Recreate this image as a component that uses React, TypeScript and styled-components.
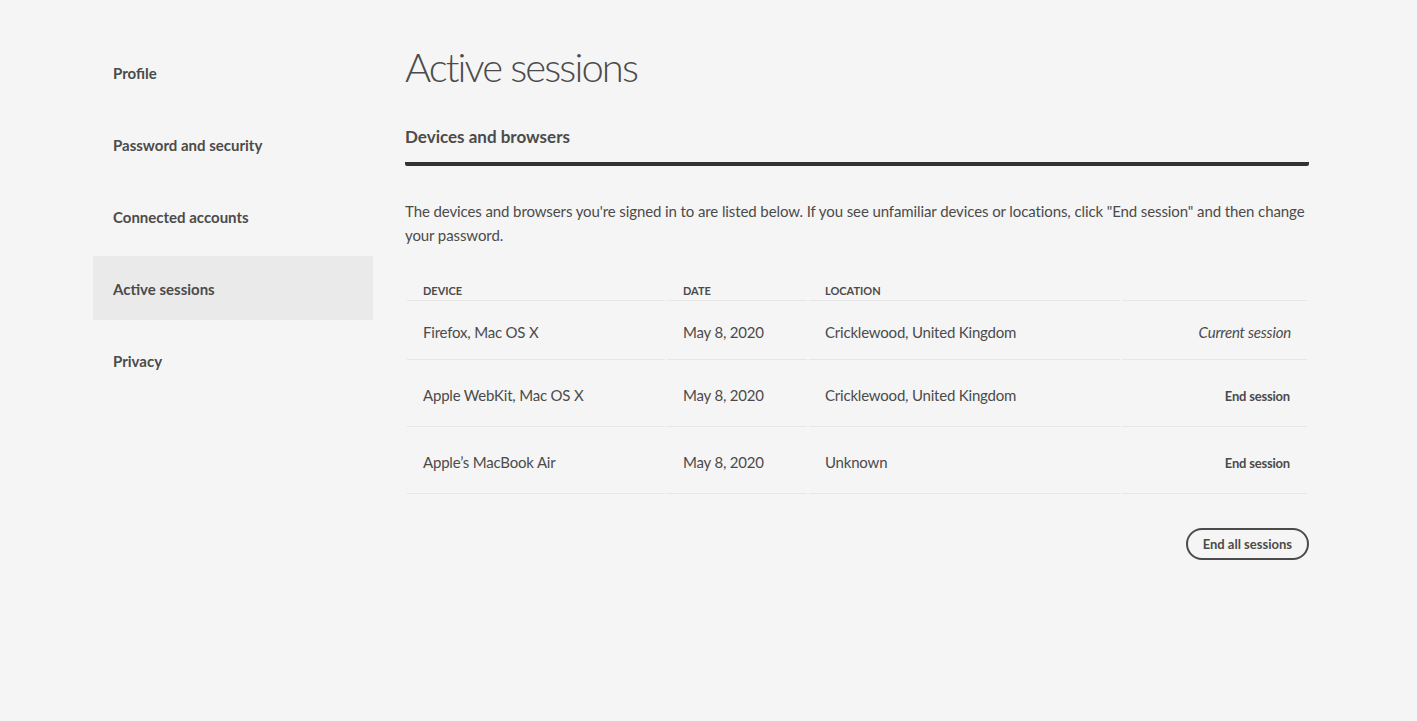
import React from 'react';
import styled, { createGlobalStyle } from 'styled-components';

interface Session {
  device: string;
  date: string;
  location: string;
  current?: boolean;
}

const navItems = ['Profile', 'Password and security', 'Connected accounts', 'Active sessions', 'Privacy'];

const sessions: Session[] = [
  { device: 'Firefox, Mac OS X', date: 'May 8, 2020', location: 'Cricklewood, United Kingdom', current: true },
  { device: 'Apple WebKit, Mac OS X', date: 'May 8, 2020', location: 'Cricklewood, United Kingdom' },
  { device: 'Apple’s MacBook Air', date: 'May 8, 2020', location: 'Unknown' },
];

function App(): JSX.Element {
  return (
    <>
      <GlobalStyle />
      <Page>
        <Sidebar>
          {navItems.map((item) => (
            <NavItem key={item} active={item === 'Active sessions'}>
              {item}
            </NavItem>
          ))}
        </Sidebar>
        <Main>
          <Title>Active sessions</Title>
          <SectionTitle>Devices and browsers</SectionTitle>
          <Intro>
            The devices and browsers you're signed in to are listed below. If you see unfamiliar devices or
            locations, click "End session" and then change your password.
          </Intro>
          <Table>
            <thead>
              <tr>
                <HeadCell width={226}>Device</HeadCell>
                <HeadCell width={108}>Date</HeadCell>
                <HeadCell width={279}>Location</HeadCell>
                <HeadCell />
              </tr>
            </thead>
            <tbody>
              {sessions.map((s, i) => (
                <Row key={s.device} first={i === 0}>
                  <Cell>{s.device}</Cell>
                  <Cell>{s.date}</Cell>
                  <Cell>{s.location}</Cell>
                  <ActionCell>
                    {s.current ? <Current>Current session</Current> : <EndLink>End session</EndLink>}
                  </ActionCell>
                </Row>
              ))}
            </tbody>
          </Table>
          <Footer>
            <EndAllButton type="button">End all sessions</EndAllButton>
          </Footer>
        </Main>
      </Page>
    </>
  );
}

const GlobalStyle = createGlobalStyle`
  html, body {
    margin: 0;
    padding: 0;
    background: #f5f5f5;
  }
  body {
    font-family: Lato, "Noto Sans", "Liberation Sans", sans-serif;
    color: #4b4b4b;
  }
`;

const Page = styled.div`
  display: flex;
  min-height: 721px;
  padding-left: 93px;
  box-sizing: border-box;
`;

const Sidebar = styled.nav`
  width: 280px;
  padding-top: 40px;
  display: flex;
  flex-direction: column;
  gap: 8px;
`;

const NavItem = styled.a<{ active?: boolean }>`
  display: flex;
  align-items: center;
  box-sizing: border-box;
  height: 64px;
  padding: 2px 0 0 20px;
  font-size: 15px;
  font-weight: 700;
  color: #4b4b4b;
  background: ${({ active }) => (active ? '#eaeaea' : 'transparent')};
  cursor: pointer;
`;

const Main = styled.main`
  width: 904px;
  margin-left: 32px;
  padding-top: 43px;
`;

const Title = styled.h1`
  margin: 0;
  font-size: 40px;
  line-height: 48px;
  font-weight: 300;
  color: #4b4b4b;
  letter-spacing: -1.9px;
`;

const SectionTitle = styled.h2`
  margin: 34px 0 0;
  font-size: 17px;
  line-height: 24px;
  font-weight: 700;
  color: #4b4b4b;
  padding-bottom: 13px;
  border-bottom: 4px solid #323232;
  border-radius: 0 0 2px 2px;
`;

const Intro = styled.p`
  margin: 33px 0 0;
  font-size: 15px;
  line-height: 24px;
  letter-spacing: -0.1px;
  color: #4b4b4b;
`;

const Table = styled.table`
  width: 100%;
  margin-top: 30px;
  border-collapse: separate;
  border-spacing: 2px 0;
  table-layout: fixed;
`;

const HeadCell = styled.th<{ width?: number }>`
  width: ${({ width }) => (width ? `${width}px` : 'auto')};
  text-align: left;
  vertical-align: bottom;
  padding: 0 16px 2px;
  height: 21px;
  line-height: 14px;
  font-size: 11px;
  font-weight: 700;
  text-transform: uppercase;
  color: #4b4b4b;
  border-bottom: 1px solid #e6e6e6;
`;

const Row = styled.tr<{ first?: boolean }>`
  height: ${({ first }) => (first ? '59px' : '67px')};
`;

const Cell = styled.td`
  padding: 4px 16px 0;
  font-size: 15px;
  letter-spacing: -0.2px;
  color: #4b4b4b;
  border-bottom: 1px solid #e6e6e6;
  white-space: nowrap;
`;

const ActionCell = styled(Cell)`
  text-align: right;
`;

const Current = styled.span`
  font-style: italic;
  font-size: 15px;
`;

const EndLink = styled.a`
  font-size: 13px;
  font-weight: 700;
  color: #4b4b4b;
  cursor: pointer;
  padding-right: 1px;
`;

const Footer = styled.div`
  display: flex;
  justify-content: flex-end;
  margin-top: 34px;
`;

const EndAllButton = styled.button`
  height: 32px;
  padding: 0 15px;
  border: 2px solid #4b4b4b;
  border-radius: 16px;
  background: transparent;
  font-family: inherit;
  font-size: 13px;
  font-weight: 700;
  color: #4b4b4b;
  cursor: pointer;
`;

export default App;
